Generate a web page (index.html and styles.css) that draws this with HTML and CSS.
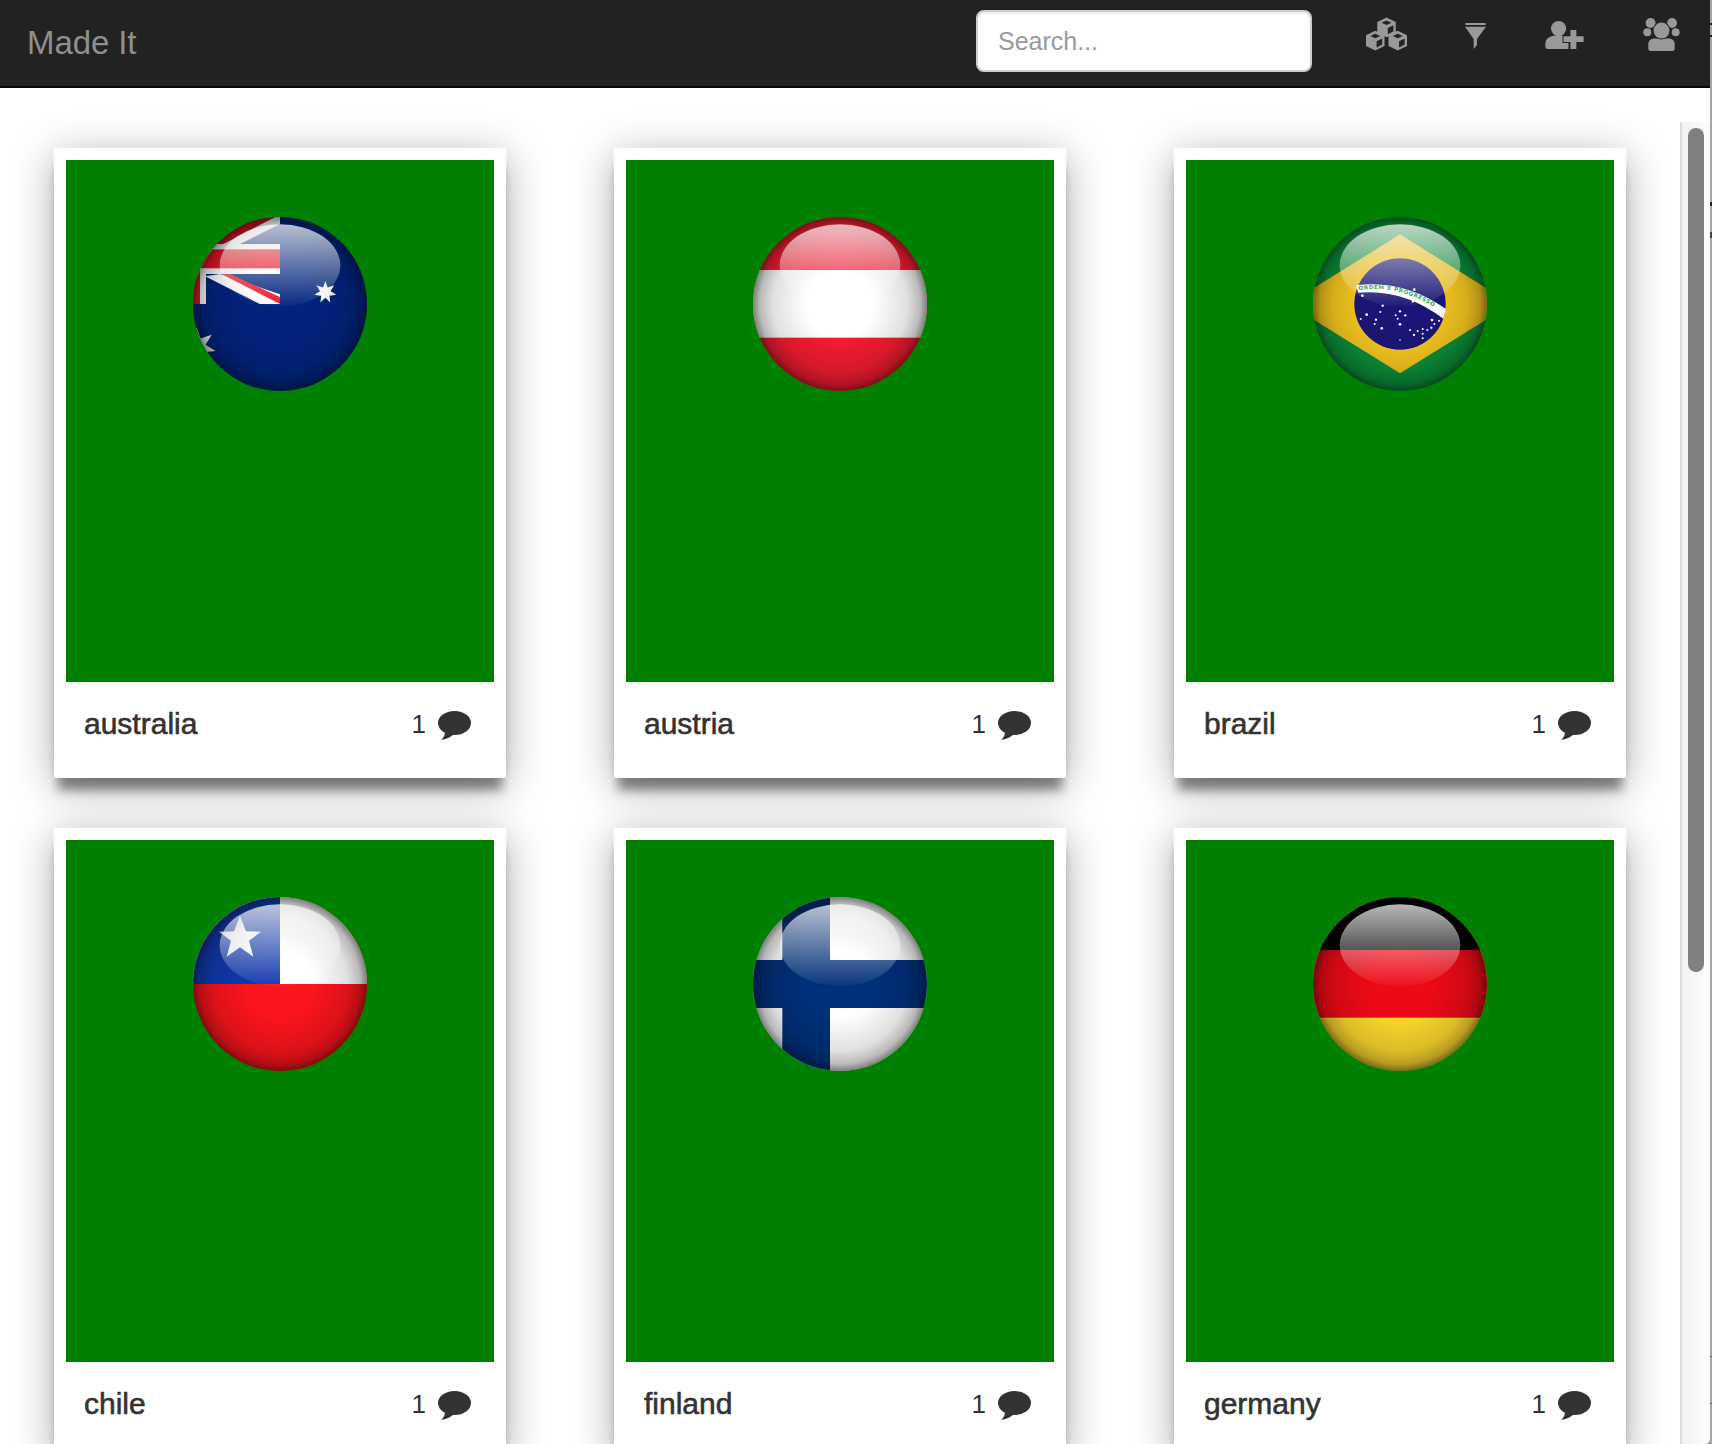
FILE: index.html
```html
<!DOCTYPE html>
<html lang="en">
<head>
  <meta charset="UTF-8" />
  <meta name="viewport" content="width=device-width, initial-scale=1" />
  <title>Made It</title>
  <link rel="stylesheet" href="styles.css">
</head>
<body>
<div class="window">

  <nav class="navbar">
    <a class="brand">Made It</a>
    <input class="search" type="text" placeholder="Search..." />
    <div class="nav-icons">
      <svg class="icon icon-cubes" viewBox="0 0 124 100" aria-label="Products">
        <defs>
          <g id="cube">
            <path class="fill" d="M28 0 L56 14 V46 L28 60 L0 46 V14Z" />
            <path class="cut" d="M28 9 L43 16 L28 23 L13 16Z" />
            <path class="cut" d="M32 32 L49 23.5 V42 L32 51Z" />
          </g>
        </defs>
        <use href="#cube" x="34" y="0" />
        <use href="#cube" x="0" y="40" />
        <use href="#cube" x="68" y="40" />
      </svg>
      <svg class="icon icon-filter" viewBox="0 0 63 78" aria-label="Filter">
        <path class="fill" d="M1 0 H62 V6 H1Z" />
        <path class="fill" d="M0 11 H63 L36 48 V66 L26 78 V48Z" />
      </svg>
      <svg class="icon icon-adduser" viewBox="0 0 116 85" aria-label="Add user">
        <circle class="fill" cx="40" cy="23" r="23" />
        <path class="fill" d="M7 85 Q0 85 0 78 V66 Q2 50 24 45 H54 Q66 48 70 60 V85Z" />
        <path class="fill plus" d="M76 27 H94 V46 H116 V64 H94 V85 H76 V64 H55 V46 H76Z" />
      </svg>
      <svg class="icon icon-group" viewBox="0 0 110 100" aria-label="Users">
        <circle class="fill" cx="22" cy="15" r="15" />
        <circle class="fill" cx="87" cy="15" r="15" />
        <circle class="fill" cx="12" cy="43" r="12" />
        <circle class="fill" cx="98" cy="43" r="12" />
        <path class="fill plus" d="M15 93 V78 Q15 66 30 62 H80 Q95 66 95 78 V93 Q95 100 88 100 H22 Q15 100 15 93Z" />
        <circle class="fill plus" cx="55" cy="38" r="24" />
      </svg>
    </div>
  </nav>

  <div class="body-row">
    <main class="content">
      <div class="card-grid">

        <article class="card">
          <div class="card-image">
            <svg class="flag" viewBox="0 0 600 600">
              <defs>
                <clipPath id="disc"><circle cx="300" cy="297" r="261" /></clipPath>
                <radialGradient id="edge" gradientUnits="userSpaceOnUse" cx="300" cy="297" r="261">
                  <stop offset="0" stop-color="#000" stop-opacity="0" />
                  <stop offset="0.38" stop-color="#000" stop-opacity="0" />
                  <stop offset="0.77" stop-color="#000" stop-opacity="0.12" />
                  <stop offset="0.92" stop-color="#000" stop-opacity="0.27" />
                  <stop offset="1" stop-color="#000" stop-opacity="0.5" />
                </radialGradient>
                <linearGradient id="gloss" x1="0" y1="0" x2="0" y2="1">
                  <stop offset="0" stop-color="#fff" stop-opacity="0.72" />
                  <stop offset="1" stop-color="#fff" stop-opacity="0.03" />
                </linearGradient>
                <g id="shine">
                  <circle cx="300" cy="297" r="261" fill="url(#edge)" />
                  <ellipse cx="300" cy="181" rx="181" ry="123" fill="url(#gloss)" />
                </g>
                <polygon id="star7" points="0,-34 6.9,-14.4 26.6,-21.2 15.6,-3.6 33.2,7.6 12.5,10 14.8,30.6 0,16 -14.8,30.6 -12.5,10 -33.2,7.6 -15.6,-3.6 -26.6,-21.2 -6.9,-14.4" fill="#fff" />
              </defs>
              <g clip-path="url(#disc)">
                <rect width="600" height="600" fill="#00247d" />
                <polygon points="40,30 300,30 285,36 130,117 40,117" fill="#d8101f" />
                <polygon points="130,117 285,36 300,30 300,57 180,117" fill="#fff" />
                <rect x="40" y="117" width="260" height="90" fill="#fff" />
                <rect x="40" y="133" width="260" height="57" fill="#ee1626" />
                <rect x="30" y="117" width="30" height="180" fill="#ee1626" />
                <rect x="60" y="190" width="18" height="107" fill="#fff" />
                <polygon points="78,213 120,207 300,268 300,297 240,297 78,215" fill="#fff" />
                <polygon points="125,207 150,207 300,276 300,297" fill="#ee1626" />
                <use href="#star7" transform="translate(436,262)" />
                <use href="#star7" transform="translate(50,425) scale(1.7)" />
              </g>
              <use href="#shine" />
            </svg>
          </div>
          <div class="card-caption">
            <span class="card-title">australia</span>
            <span class="card-comments">1
              <svg class="bubble" viewBox="0 0 33 29"><ellipse cx="16.5" cy="12" rx="16.5" ry="12" /><path d="M7 20 Q7 26 3 29 Q11 28 16 23Z" /></svg>
            </span>
          </div>
        </article>

        <article class="card">
          <div class="card-image">
            <svg class="flag" viewBox="0 0 600 600">
              <g clip-path="url(#disc)">
                <rect width="600" height="600" fill="#f41c30" />
                <rect y="195" width="600" height="203" fill="#fff" />
              </g>
              <use href="#shine" />
            </svg>
          </div>
          <div class="card-caption">
            <span class="card-title">austria</span>
            <span class="card-comments">1
              <svg class="bubble" viewBox="0 0 33 29"><ellipse cx="16.5" cy="12" rx="16.5" ry="12" /><path d="M7 20 Q7 26 3 29 Q11 28 16 23Z" /></svg>
            </span>
          </div>
        </article>

        <article class="card">
          <div class="card-image">
            <svg class="flag" viewBox="0 0 600 600">
              <defs>
                <path id="motto" d="M176 256 Q310 236 432 327" />
              </defs>
              <g clip-path="url(#disc)">
                <rect width="600" height="600" fill="#0a8f38" />
                <polygon points="300,88 635,297 300,505 -35,297" fill="#f4c61f" />
                <circle cx="300" cy="297" r="137" fill="#1b1675" />
                <path d="M167 241 Q310 222 438 312 L430 341 Q310 250 175 263Z" fill="#fff" />
                <text class="motto"><textPath href="#motto">ORDEM E PROGRESSO</textPath></text>
                <g fill="#fff">
                  <circle cx="343" cy="254" r="4" /><circle cx="187" cy="272" r="4" />
                  <circle cx="248" cy="302" r="3.5" /><circle cx="338" cy="290" r="3" />
                  <circle cx="300" cy="319" r="3.5" /><circle cx="241" cy="321" r="3" />
                  <circle cx="200" cy="329" r="4" /><circle cx="287" cy="331" r="3" />
                  <circle cx="316" cy="331" r="3.5" /><circle cx="293" cy="341" r="3" />
                  <circle cx="228" cy="344" r="3.5" /><circle cx="182" cy="342" r="3" />
                  <circle cx="396" cy="345" r="4" /><circle cx="417" cy="347" r="3" />
                  <circle cx="403" cy="357" r="3" /><circle cx="224" cy="357" r="3" />
                  <circle cx="300" cy="358" r="4" /><circle cx="245" cy="370" r="4" />
                  <circle cx="394" cy="368" r="3.5" /><circle cx="382" cy="375" r="3" />
                  <circle cx="330" cy="375" r="3" /><circle cx="353" cy="378" r="3" />
                  <circle cx="368" cy="372" r="3" /><circle cx="342" cy="390" r="3.5" />
                  <circle cx="368" cy="386" r="3" /><circle cx="368" cy="400" r="3" />
                  <circle cx="300" cy="405" r="2.5" />
                </g>
              </g>
              <use href="#shine" />
            </svg>
          </div>
          <div class="card-caption">
            <span class="card-title">brazil</span>
            <span class="card-comments">1
              <svg class="bubble" viewBox="0 0 33 29"><ellipse cx="16.5" cy="12" rx="16.5" ry="12" /><path d="M7 20 Q7 26 3 29 Q11 28 16 23Z" /></svg>
            </span>
          </div>
        </article>

        <article class="card">
          <div class="card-image">
            <svg class="flag" viewBox="0 0 600 600">
              <g clip-path="url(#disc)">
                <rect width="600" height="600" fill="#fb141c" />
                <rect y="0" width="600" height="297" fill="#fff" />
                <rect y="0" width="300" height="297" fill="#1138ac" />
                <polygon points="180,92 198,139 243,140 207,167 220,215 180,187 140,215 153,167 117,140 162,139" fill="#fff" />
              </g>
              <use href="#shine" />
            </svg>
          </div>
          <div class="card-caption">
            <span class="card-title">chile</span>
            <span class="card-comments">1
              <svg class="bubble" viewBox="0 0 33 29"><ellipse cx="16.5" cy="12" rx="16.5" ry="12" /><path d="M7 20 Q7 26 3 29 Q11 28 16 23Z" /></svg>
            </span>
          </div>
        </article>

        <article class="card">
          <div class="card-image">
            <svg class="flag" viewBox="0 0 600 600">
              <g clip-path="url(#disc)">
                <rect width="600" height="600" fill="#fff" />
                <rect x="127" width="143" height="600" fill="#00307a" />
                <rect y="225" width="600" height="144" fill="#00307a" />
              </g>
              <use href="#shine" />
            </svg>
          </div>
          <div class="card-caption">
            <span class="card-title">finland</span>
            <span class="card-comments">1
              <svg class="bubble" viewBox="0 0 33 29"><ellipse cx="16.5" cy="12" rx="16.5" ry="12" /><path d="M7 20 Q7 26 3 29 Q11 28 16 23Z" /></svg>
            </span>
          </div>
        </article>

        <article class="card">
          <div class="card-image">
            <svg class="flag" viewBox="0 0 600 600">
              <g clip-path="url(#disc)">
                <rect width="600" height="600" fill="#fad62c" />
                <rect width="600" height="398" fill="#ec0a16" />
                <rect width="600" height="195" fill="#000" />
              </g>
              <use href="#shine" />
            </svg>
          </div>
          <div class="card-caption">
            <span class="card-title">germany</span>
            <span class="card-comments">1
              <svg class="bubble" viewBox="0 0 33 29"><ellipse cx="16.5" cy="12" rx="16.5" ry="12" /><path d="M7 20 Q7 26 3 29 Q11 28 16 23Z" /></svg>
            </span>
          </div>
        </article>

      </div>
    </main>

    <div class="scrollbar"><div class="scrollbar-thumb"></div></div>
  </div>

</div>
</body>
</html>
```

FILE: styles.css
```css
:root {
  --nav-bg: #222222;
  --nav-icon: #999999;
  --text-color: #333333;
  --card-green: #008000;
}
* {
  box-sizing: border-box;
}
html, body {
  height: 100%;
  margin: 0;
  overflow: hidden;
}
body {
  font-family: "Liberation Sans", Arial, sans-serif;
  color: var(--text-color);
  /* sliver of the desktop behind the browser window */
  background: linear-gradient(to bottom,
    #a6a6a6 0, #a6a6a6 23px, #222 23px, #222 25px, #a6a6a6 25px, #a6a6a6 35px, #222 35px, #222 37px,
    #a6a6a6 37px, #a6a6a6 202px, #222 202px, #222 206px, #a6a6a6 206px, #a6a6a6 232px, #443 232px, #443 238px,
    #a6a6a6 238px, #a6a6a6 1356px, #666 1356px, #666 1357px, #a6a6a6 1357px, #a6a6a6 1403px, #666 1403px, #666 1404px, #a6a6a6 1404px);
}
.window {
  width: 1710px;
  height: 100%;
  display: flex;
  flex-direction: column;
  background: #fff;
  border-bottom-right-radius: 6px;
  overflow: hidden;
}

/* navbar */
.navbar {
  flex: none;
  height: 88px;
  display: flex;
  align-items: center;
  padding: 0 30px 0 27px;
  background: var(--nav-bg);
  border-bottom: 2px solid #080808;
}
.brand {
  font-size: 33px;
  letter-spacing: -0.1px;
  color: #8f8f8f;
}
.search {
  align-self: flex-start;
  width: 336px;
  height: 62px;
  margin: 10px 54px 0 auto;
  padding: 0 20px;
  font-family: inherit;
  font-size: 25px;
  background: #fff;
  border: 2px solid #ccc;
  border-radius: 8px;
  box-shadow: inset 0 2px 2px rgba(0, 0, 0, 0.075);
}
.search::placeholder {
  color: #999;
  opacity: 1;
}
.nav-icons {
  align-self: flex-start;
  display: flex;
  align-items: center;
  gap: 59px;
  margin-top: 17px;
  height: 34px;
}
.icon {
  display: block;
  flex: none;
}
.icon .fill {
  fill: var(--nav-icon);
}
.icon .cut {
  fill: var(--nav-bg);
}
.icon .plus {
  stroke: var(--nav-bg);
  stroke-width: 6;
  paint-order: stroke;
}
.icon-cubes {
  width: 41px;
  height: 34px;
  margin-right: -1px;
}
.icon-filter {
  width: 21px;
  height: 26px;
  margin-top: 4px;
}
.icon-adduser {
  width: 39px;
  height: 28px;
  margin-top: 2px;
}
.icon-group {
  width: 37px;
  height: 33px;
}

/* main area */
.body-row {
  flex: 1;
  min-height: 0;
  display: flex;
}
.content {
  flex: 1;
  min-width: 0;
  overflow: hidden;
  padding: 60px 0 0 54px;
}
.card-grid {
  display: grid;
  grid-template-columns: repeat(3, 452px);
  column-gap: 108px;
  row-gap: 50px;
}
.card {
  height: 630px;
  padding: 12px 12px 12px;
  display: flex;
  flex-direction: column;
  background: #fff;
  box-shadow: 0 16px 10px -4px rgba(0, 0, 0, 0.42), 0 8px 40px rgba(0, 0, 0, 0.32);
}
.card-image {
  flex: none;
  height: 522px;
  padding-top: 45px;
  background: var(--card-green);
}
.flag {
  display: block;
  width: 200px;
  height: 200px;
  margin: 0 auto;
}
.motto {
  font-family: "DejaVu Sans", sans-serif;
  font-size: 17px;
  font-weight: 700;
  letter-spacing: 1.5px;
  fill: #169a48;
}
.card-caption {
  flex: 1;
  display: flex;
  align-items: center;
  justify-content: space-between;
  padding: 0 23px 0 18px;
}
.card-title {
  font-size: 30px;
  -webkit-text-stroke: 0.6px var(--text-color);
}
.card-comments {
  display: flex;
  align-items: center;
  gap: 12px;
  font-size: 26px;
  line-height: 26px;
}
.bubble {
  display: block;
  width: 33px;
  height: 29px;
  margin-top: 3px;
  fill: var(--text-color);
}

/* scrollbar */
.scrollbar {
  flex: none;
  width: 30px;
  margin-top: 34px;
  padding: 6px 0 0 6px;
  background: linear-gradient(to right, #f2f2f2, #fdfdfd);
  border-left: 2px solid #dcdcdc;
}
.scrollbar-thumb {
  width: 16px;
  height: 844px;
  background: #808080;
  border-radius: 8px;
}
```
